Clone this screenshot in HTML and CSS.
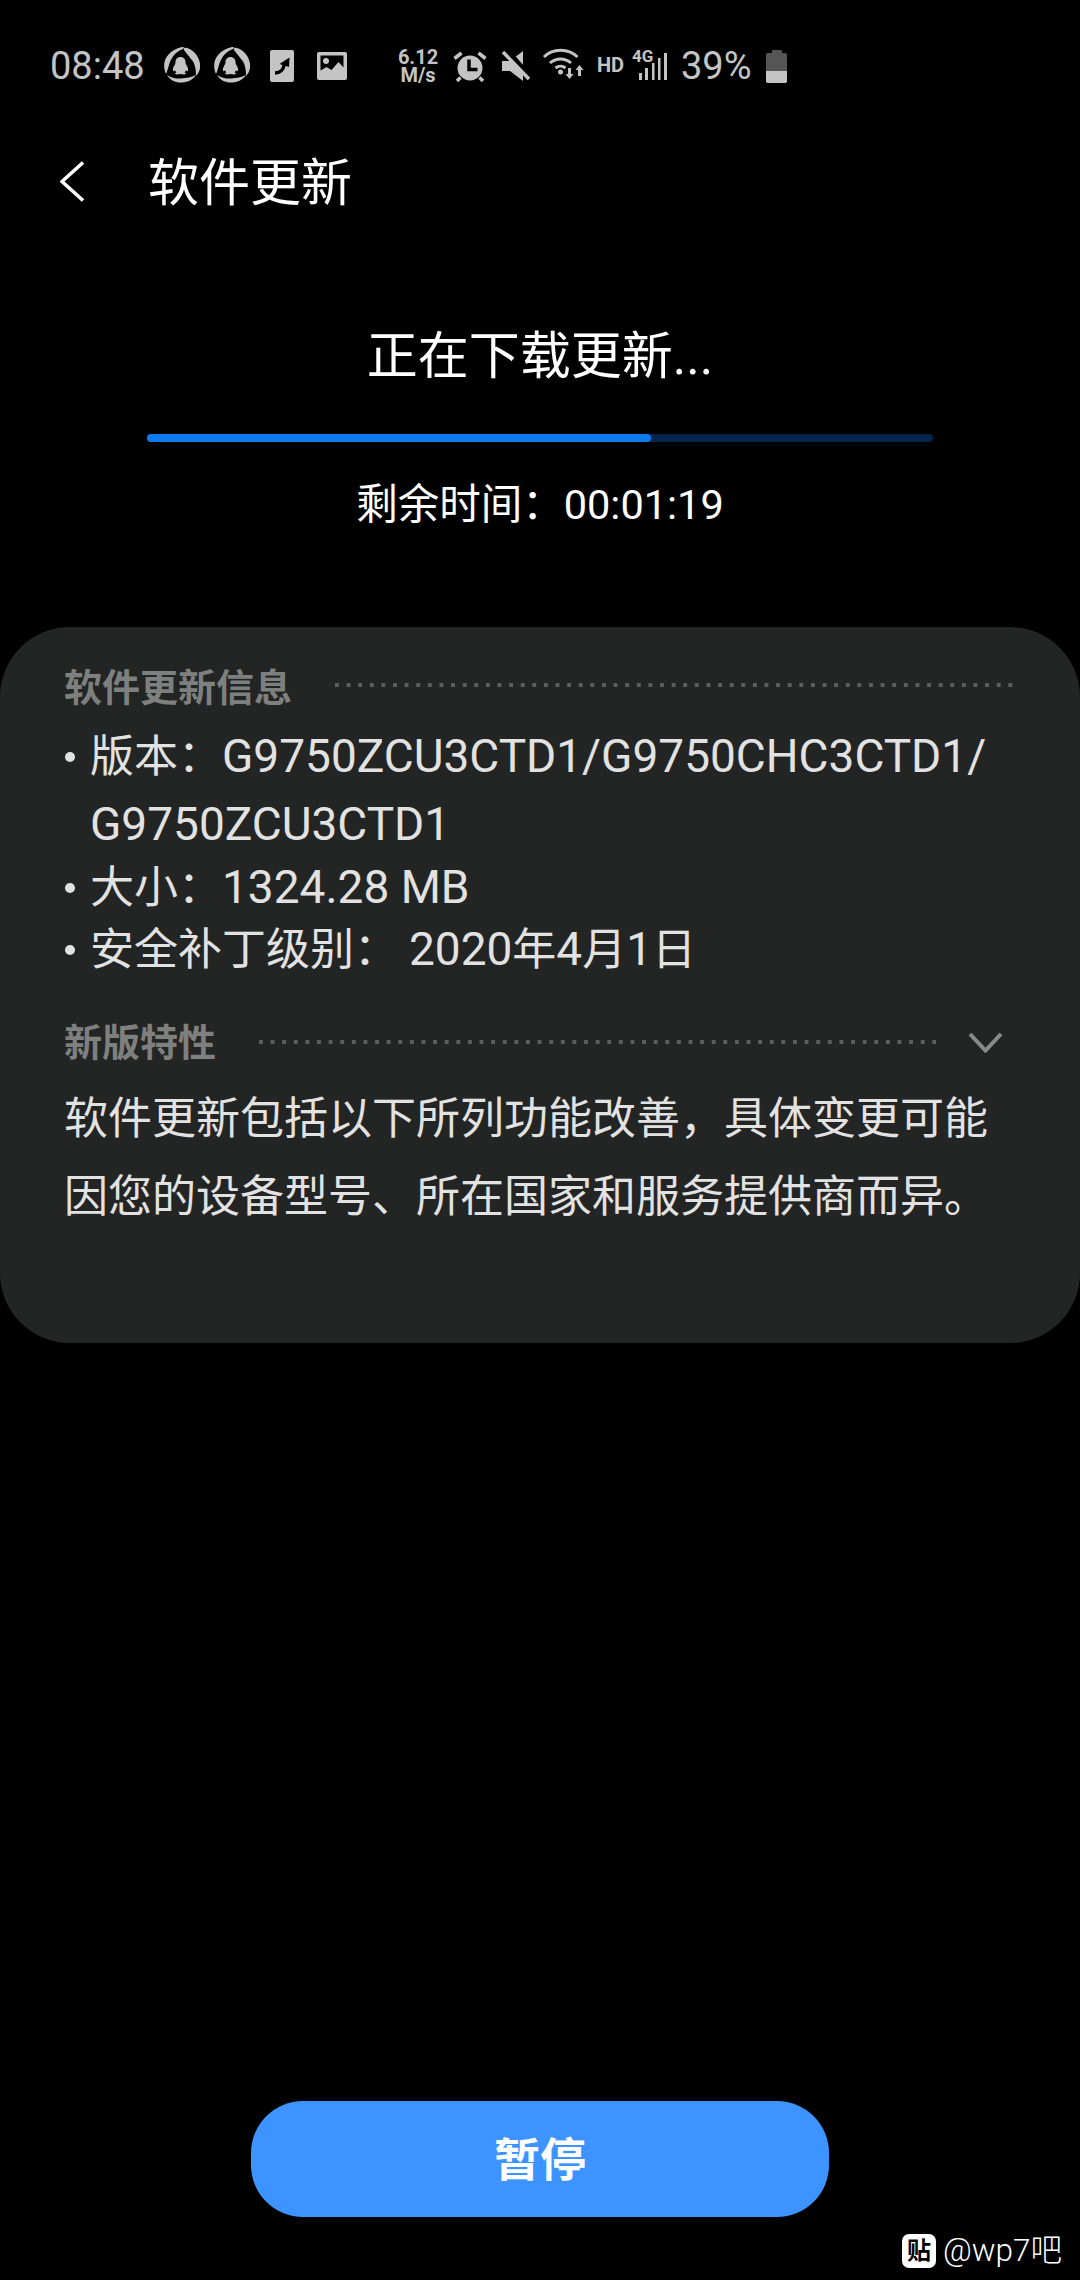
FILE: index.html
```html
<!DOCTYPE html>
<html lang="zh-CN">
  <head>
    <meta charset="UTF-8" />
    <meta name="viewport" content="width=device-width, initial-scale=1.0" />
    <title>软件更新</title>
    <link rel="stylesheet" href="styles.css">
  </head>
  <body>
    <div class="page">
      <div class="status-bar">
        <span class="clock">08:48</span>
        <svg class="icon-qq" viewBox="0 0 37 36">
          <path class="solid" d="M3 27C-2 16 3 4 19 0c2-.3 2.500 1 1 2C12 5 8 11 6 18c-1 3-2 7-3 9z" />
          <path class="solid" d="M21 3c-1-2 1-2.500 3-2 9 3 14 12 13 20-.3 3-2 6-4 8 0-7-1-13-5-17-2-3-5-6-7-9z" />
          <path class="solid" d="M4 28c5 3 10 4 14 3.500 6-.7 10-1 15-3.500-3 5-9 7.500-15 7.500S7 33 4 28z" />
          <path class="solid" d="M17.500 10c3.300 0 5 2.400 5 5 0 1.500.5 2.500 1.300 3.700 1.200 1.900 1.700 3.800 1 5.300-.5.400-1.200 0-1.800-.8-.3 1-.8 1.700-1.500 2.300 1.200.4 1.600 1 1.300 1.400-.6.700-3 .6-5.300 0-2.300.6-4.700.7-5.300 0-.3-.4.100-1 1.300-1.400-.7-.6-1.200-1.300-1.500-2.300-.6.800-1.300 1.200-1.800.8-.7-1.500-.2-3.400 1-5.300.8-1.200 1.300-2.200 1.300-3.700 0-2.600 1.700-5 5-5z" />
        </svg>
        <svg class="icon-qq" viewBox="0 0 37 36">
          <path class="solid" d="M3 27C-2 16 3 4 19 0c2-.3 2.500 1 1 2C12 5 8 11 6 18c-1 3-2 7-3 9z" />
          <path class="solid" d="M21 3c-1-2 1-2.500 3-2 9 3 14 12 13 20-.3 3-2 6-4 8 0-7-1-13-5-17-2-3-5-6-7-9z" />
          <path class="solid" d="M4 28c5 3 10 4 14 3.500 6-.7 10-1 15-3.500-3 5-9 7.500-15 7.500S7 33 4 28z" />
          <path class="solid" d="M17.500 10c3.300 0 5 2.400 5 5 0 1.500.5 2.500 1.300 3.700 1.200 1.900 1.700 3.800 1 5.300-.5.400-1.200 0-1.800-.8-.3 1-.8 1.700-1.500 2.300 1.200.4 1.600 1 1.300 1.400-.6.700-3 .6-5.300 0-2.300.6-4.700.7-5.300 0-.3-.4.100-1 1.300-1.400-.7-.6-1.200-1.300-1.500-2.300-.6.800-1.300 1.200-1.800.8-.7-1.500-.2-3.400 1-5.300.8-1.200 1.300-2.200 1.300-3.700 0-2.600 1.700-5 5-5z" />
        </svg>
        <svg class="icon-doc" viewBox="0 0 24 32">
          <rect class="solid" width="24" height="32" rx="2" />
          <path class="cut" d="M5 23c5 0 8-2 9.500-9" />
          <path class="notch" d="M9.500 14L19.500 7.500 19 17z" />
        </svg>
        <svg class="icon-image" viewBox="0 0 30 28">
          <path class="solid" fill-rule="evenodd" d="M2 0h26a2 2 0 0 1 2 2v24a2 2 0 0 1-2 2H2a2 2 0 0 1-2-2V2a2 2 0 0 1 2-2zM3.500 3.500v15l6-3.500 5 3 7-8 5 5.500V3.500z" />
          <circle class="solid" cx="9" cy="9" r="3" />
        </svg>
        <span class="speed">6.12<br>M/s</span>
        <svg class="icon-alarm" viewBox="0 0 35 31">
          <circle class="solid" cx="17" cy="17" r="12.500" />
          <path class="line" d="M1.500 7.500L8.500 2M32.500 7.500L25.500 2M4 30l3.500-3.500M30 30l-3.500-3.500" />
          <path class="cut" d="M16 8.500V18.500h8.500" />
        </svg>
        <svg class="icon-mute" viewBox="0 0 28 30">
          <path class="solid" d="M0 10h8L21 0v30L8 20H0z" />
          <path class="cut-wide" d="M4-2l26 30" />
          <path class="line" d="M1 1l26 27" />
        </svg>
        <svg class="icon-wifi" viewBox="0 0 42 30">
          <path class="wifi-arc" d="M1 9C10 0 25 0 34.500 9" />
          <path class="wifi-arc" d="M7 15c6-5.500 15-5.500 21 0" />
          <path class="wifi-arc" d="M12.500 20c3-2.500 7-2.500 10 0" />
          <circle class="solid" cx="17.500" cy="24" r="2.500" />
          <path class="solid" d="M25 20h3v6h2.500L26.500 31 22.500 26H25zM35 28h3v-6h2.500L36.500 17 32.500 22H35z" />
        </svg>
        <span class="hd">HD</span>
        <div class="signal">
          <span class="net">4G</span>
          <svg class="icon-bars" viewBox="0 0 29 28">
            <path class="solid" d="M1 21h3v7H1zM7 16h3v12H7zM14 11h2.500v17H14zM20 6h2.500v22H20zM26 1h3v27h-3z" />
          </svg>
        </div>
        <span class="percent">39%</span>
        <div class="battery"><div class="battery-cap"></div><div class="battery-body"><div class="battery-level"></div></div></div>
      </div>

      <div class="app-bar">
        <svg class="back" viewBox="0 0 24 41">
          <path d="M23 1.500L2 20.500l21 19" />
        </svg>
        <h1>软件更新</h1>
      </div>

      <div class="progress-block">
        <h2>正在下载更新...</h2>
        <div class="track"><div class="bar"></div></div>
        <p class="remaining">剩余时间：00:01:19</p>
      </div>

      <div class="card">
        <div class="section-head">
          <h3>软件更新信息</h3>
          <div class="dots dots-raised"></div>
        </div>
        <ul class="info-list">
          <li class="version-row"><span>版本：<span class="latin">G9750ZCU3CTD1/G9750CHC3CTD1/</span><br><span class="latin">G9750ZCU3CTD1</span></span></li>
          <li><span>大小：<span class="latin">1324.28 MB</span></span></li>
          <li><span>安全补丁级别： <span class="latin">2020</span>年<span class="latin">4</span>月<span class="latin">1</span>日</span></li>
        </ul>
        <div class="section-head features-head">
          <h3>新版特性</h3>
          <div class="dots"></div>
          <svg class="chevron" viewBox="0 0 35 21">
            <path d="M2 2L17.500 18.500 33 2" />
          </svg>
        </div>
        <p class="features">软件更新包括以下所列功能改善，具体变更可能<br>因您的设备型号、所在国家和服务提供商而异。</p>
      </div>

      <button class="pause">暂停</button>

      <div class="watermark">
        <span class="tieba">贴</span>
        <span class="handle">@wp7吧</span>
      </div>
    </div>
  </body>
</html>
```

FILE: styles.css
```css
:root {
  --status-color: #c4c4c4;
  --card-color: #232524;
  --body-text: #e2e2e2;
  --head-text: #7e807f;
  --blue: #3d93ff;
}

* {
  box-sizing: border-box;
}

body {
  margin: 0;
  background: #000;
  font-family: Roboto, "Noto Sans CJK SC", sans-serif;
  color: #fff;
}

.page {
  position: relative;
  width: 1080px;
  height: 2280px;
  display: flex;
  flex-direction: column;
  overflow: hidden;
}

/* Status bar */
.status-bar {
  height: 132px;
  padding-left: 50px;
  display: flex;
  align-items: center;
  color: var(--status-color);
}

.status-bar svg {
  flex: none;
}

.solid {
  fill: var(--status-color);
}

.notch {
  fill: #000;
}

.cut,
.cut-wide {
  fill: none;
  stroke: #000;
  stroke-width: 3.5;
}

.cut-wide {
  stroke-width: 5;
}

.line {
  fill: none;
  stroke: var(--status-color);
  stroke-width: 3.5;
}

.clock {
  font-size: 38px;
  width: 113px;
}

.icon-qq {
  width: 37px;
  height: 36px;
  margin-right: 13px;
  margin-bottom: 2px;
}

.icon-doc {
  width: 24px;
  height: 32px;
  margin-left: 7px;
}

.icon-image {
  width: 30px;
  height: 28px;
  margin-left: 23px;
}

.speed {
  width: 44px;
  margin-left: 49px;
  margin-right: 13px;
  font-size: 20px;
  font-weight: 700;
  line-height: 18px;
  text-align: center;
}

.icon-alarm {
  width: 35px;
  height: 31px;
}

.icon-mute {
  width: 28px;
  height: 30px;
  margin-left: 14px;
}

.icon-wifi {
  width: 42px;
  height: 30px;
  margin-left: 13px;
  margin-bottom: 6px;
  overflow: visible;
}

.wifi-arc {
  fill: none;
  stroke: var(--status-color);
  stroke-width: 3;
}

.hd {
  margin-left: 12px;
  margin-bottom: 2px;
  font-size: 20px;
  font-weight: 700;
  width: 34px;
}

.signal {
  position: relative;
  width: 36px;
  height: 32px;
}

.net {
  position: absolute;
  left: 1px;
  top: -4px;
  font-size: 17px;
  font-weight: 700;
}

.icon-bars {
  position: absolute;
  right: 0;
  bottom: 2px;
  width: 29px;
  height: 28px;
}

.percent {
  margin-left: 14px;
  font-size: 38px;
  width: 85px;
}

.battery {
  width: 21px;
  height: 33px;
  display: flex;
  flex-direction: column;
  align-items: center;
}

.battery-cap {
  width: 10px;
  height: 3px;
  background: #555;
  border-radius: 1px 1px 0 0;
}

.battery-body {
  flex: 1;
  width: 100%;
  background: #555;
  border-radius: 2px;
  display: flex;
  align-items: flex-end;
  overflow: hidden;
}

.battery-level {
  width: 100%;
  height: 12px;
  background: var(--status-color);
}

/* App bar */
.app-bar {
  height: 98px;
  padding-left: 60px;
  display: flex;
  align-items: center;
  gap: 64px;
}

.back {
  width: 24px;
  height: 41px;
  fill: none;
  stroke: #fff;
  stroke-width: 3.5;
}

h1 {
  margin: 0;
  padding-top: 6px;
  font-size: 51px;
  font-weight: 400;
  line-height: 60px;
}

/* Download progress */
.progress-block {
  margin-top: 92px;
  display: flex;
  flex-direction: column;
  align-items: center;
}

h2 {
  margin: 0;
  font-size: 51px;
  font-weight: 400;
  line-height: 70px;
}

.track {
  width: 786px;
  height: 8px;
  margin-top: 42px;
  border-radius: 4px;
  background: #03244c;
}

.bar {
  width: 504px;
  height: 100%;
  border-radius: 4px;
  background: #0c7bf0;
}

.remaining {
  margin: 38px 0 0;
  font-size: 41.5px;
  line-height: 50px;
}

/* Info card */
.card {
  margin-top: 97px;
  height: 716px;
  padding: 35px 66px 0 64px;
  border-radius: 70px;
  background: var(--card-color);
}

.section-head {
  height: 50px;
  display: flex;
  align-items: center;
  gap: 43px;
}

h3 {
  margin: 0;
  padding-top: 3px;
  font-size: 38px;
  font-weight: 700;
  line-height: 47px;
  color: var(--head-text);
}

.dots {
  flex: 1;
  height: 4px;
  background-image: linear-gradient(90deg, #5c5e5d 4px, transparent 4px);
  background-size: 11.62px 4px;
}

.dots-raised {
  margin-bottom: 4px;
}

.info-list {
  list-style: none;
  margin: 11px 0 0;
  padding: 0;
  font-size: 44px;
  line-height: 62px;
  color: var(--body-text);
}

.latin {
  font-size: 46px;
  line-height: 1;
}

.info-list li {
  display: flex;
}

.info-list li::before {
  content: "";
  flex: none;
  width: 10px;
  height: 10px;
  margin: 26px 15px 0 1px;
  border-radius: 50%;
  background: var(--body-text);
}

.version-row {
  line-height: 68px;
  margin-bottom: -2px;
}

.info-list .version-row::before {
  margin-top: 29px;
}

.features-head {
  margin-top: 36px;
  padding-right: 11px;
}

.chevron {
  flex: none;
  width: 35px;
  height: 21px;
  margin-left: -11px;
  fill: none;
  stroke: #8a8a8a;
  stroke-width: 4;
}

.features {
  margin: 13px 0 0;
  font-size: 44px;
  line-height: 78px;
  color: var(--body-text);
}

/* Bottom button */
.pause {
  align-self: center;
  width: 578px;
  height: 116px;
  margin-top: auto;
  margin-bottom: 63px;
  padding-bottom: 7px;
  border: none;
  border-radius: 52px;
  background: var(--blue);
  color: #fff;
  font-family: inherit;
  font-size: 46px;
  font-weight: 700;
}

.watermark {
  position: absolute;
  left: 902px;
  top: 2234px;
  display: flex;
  align-items: center;
  gap: 7px;
}

.tieba {
  width: 34px;
  height: 34px;
  border-radius: 7px;
  background: #fff;
  color: #000;
  font-size: 24px;
  font-weight: 700;
  line-height: 34px;
  text-align: center;
}

.handle {
  font-size: 31.5px;
  font-weight: 300;
  line-height: 34px;
}
```
